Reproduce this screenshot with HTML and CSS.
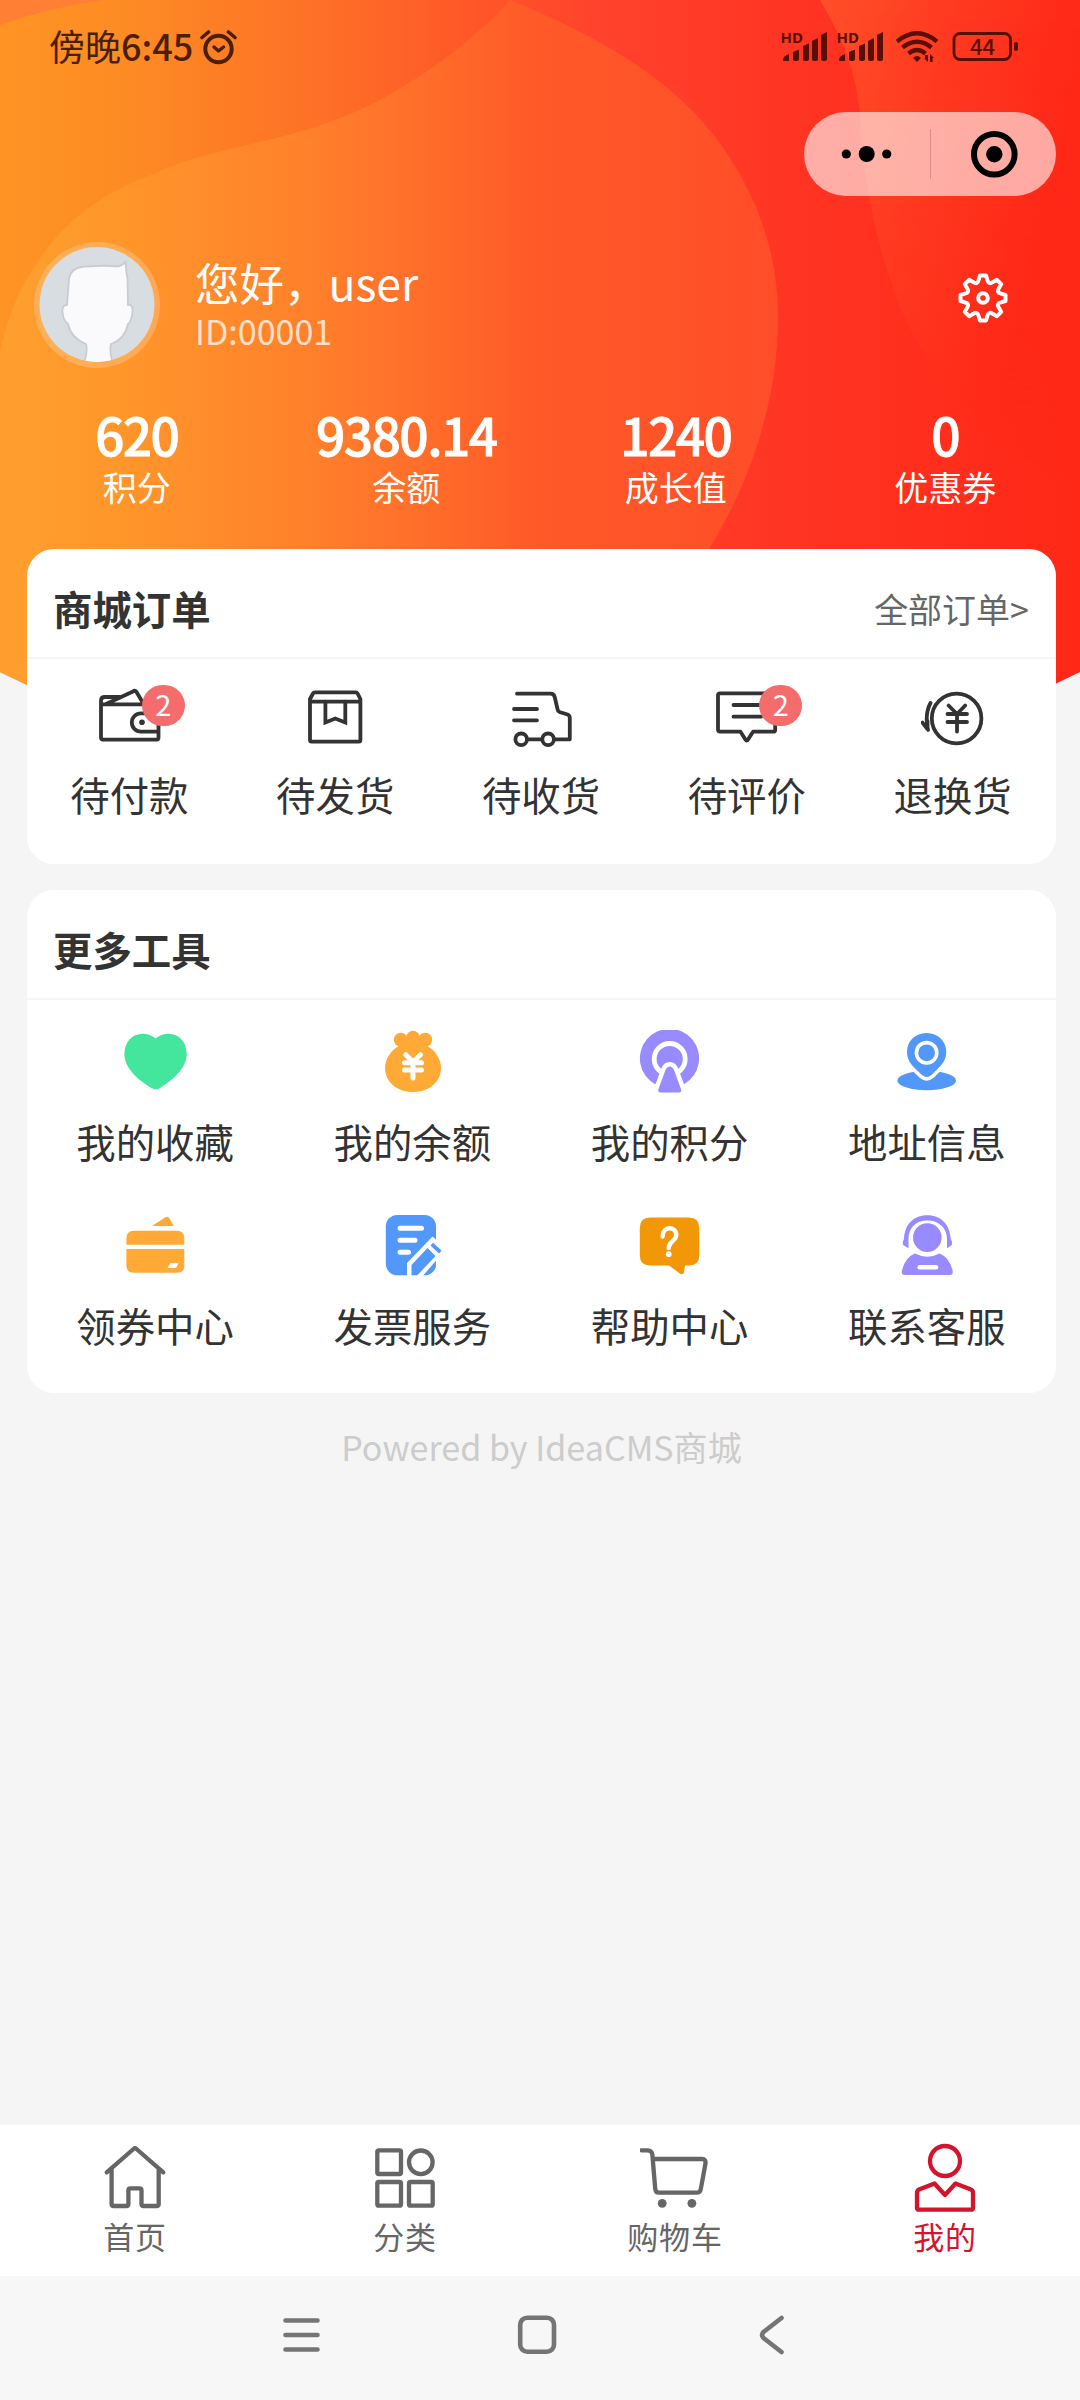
FILE: index.html
```html
<!DOCTYPE html>
<html lang="zh-CN">
<head>
<meta charset="utf-8">
<title>我的</title>
<link rel="stylesheet" href="styles.css">
</head>
<body>
<div class="phone">
  <header class="hero">
    <svg class="hero-bg" viewBox="0 0 1080 810" width="1080" height="810" aria-hidden="true">
      <defs>
        <linearGradient id="base" gradientUnits="userSpaceOnUse" x1="0" y1="0" x2="1080" y2="0">
          <stop offset="0" stop-color="#fe9423"/><stop offset=".12" stop-color="#fd8b24"/><stop offset=".3" stop-color="#fe6f27"/><stop offset=".46" stop-color="#ff5328"/><stop offset=".55" stop-color="#ff432c"/><stop offset=".75" stop-color="#ff3322"/><stop offset="1" stop-color="#ff2817"/>
        </linearGradient>
        <linearGradient id="blob" gradientUnits="userSpaceOnUse" x1="0" y1="0" x2="780" y2="0">
          <stop offset="0" stop-color="#ff9f30"/><stop offset=".16" stop-color="#ff962a"/><stop offset=".4" stop-color="#ff802b"/><stop offset=".54" stop-color="#ff6e2a"/><stop offset=".68" stop-color="#ff5a28"/><stop offset="1" stop-color="#ff4d29"/>
        </linearGradient>
        <linearGradient id="side" gradientUnits="userSpaceOnUse" x1="820" y1="0" x2="1080" y2="60">
          <stop offset="0" stop-color="#ff5029"/><stop offset=".5" stop-color="#ff3a20"/><stop offset="1" stop-color="#ff2817"/>
        </linearGradient>
        <linearGradient id="sideFade" gradientUnits="userSpaceOnUse" x1="0" y1="0" x2="0" y2="490">
          <stop offset="0" stop-color="#fff"/><stop offset=".6" stop-color="#ddd"/><stop offset="1" stop-color="#444"/>
        </linearGradient>
        <mask id="sideMask"><rect x="800" width="280" height="500" fill="url(#sideFade)"/></mask>
        <clipPath id="arc"><path d="M0 0H1080V672Q540 940 0 672Z"/></clipPath>
      </defs>
      <g clip-path="url(#arc)">
        <rect width="1080" height="810" fill="url(#base)"/>
        <path d="M0 25Q50 7 105 0H0Z" fill="#ff8034"/>
        <path d="M510 0C620 45 680 90 716 138C755 190 778 250 778 317C778 410 745 490 709 549L640 810H0V353C8 310 28 270 55 239C90 200 120 188 160 171C215 148 265 145 330 122C400 97 470 45 510 0Z" fill="url(#blob)"/>
        <path d="M820 0C842 38 856 69 860 115C864 190 878 245 895 294C915 350 965 430 1080 490V0Z" fill="url(#side)" mask="url(#sideMask)"/>
      </g>
    </svg>

    <div class="status">
      <div class="status-time">
        <span>傍晚<b>6:45</b></span>
        <svg class="alarm" viewBox="0 0 38 36" width="38" height="36" fill="none" stroke="#4b1f04" stroke-width="4" stroke-linecap="round" stroke-linejoin="round">
          <circle cx="18.500" cy="20" r="13.200"/><path d="M14 18l4.500 4 5-4" stroke-width="3.400"/><path d="M2 8.500L8.500 3M28.500 3L35 8.500" stroke-width="3.600"/>
        </svg>
      </div>
      <svg class="status-icons" viewBox="0 0 240 34" width="240" height="34" fill="#571003">
        <g id="signal">
          <text x=".5" y="12.800" class="hd">HD</text>
          <path d="M3 30q0-4 6-6v7h-5q-1 0-1-1M13 22l6-2.600V29q0 2-2 2h-2q-2 0-2-2zM23 16l6-2.600V29q0 2-2 2h-2q-2 0-2-2zM32 11l6-3V29q0 2-2 2h-2q-2 0-2-2zM41 5l6-3V29q0 2-2 2h-2q-2 0-2-2z"/>
        </g>
        <use href="#signal" x="56"/>
        <g fill="none" stroke="#571003" stroke-width="4.400">
          <path d="M117 11.500Q137 -5 157 11.500M122.500 17.500Q137 6 151.500 17.500M128.500 23.500Q137 16.500 145.500 23.500"/>
        </g>
        <path d="M133 28q4-4 8 0l-4 4zM145 25h3v7l-4-4h1zM150 32v-8l4 4h-1.500v4z"/>
        <rect x="174" y="3.500" width="56.500" height="26" rx="6" fill="none" stroke="#571003" stroke-width="2.800"/>
        <rect x="234" y="12" width="4" height="9" rx="2"/>
        <text x="202.500" y="25" text-anchor="middle" class="battery">44</text>
      </svg>
    </div>

    <div class="capsule">
      <svg viewBox="0 0 126 84" width="126" height="84"><circle cx="42.300" cy="42" r="4.600"/><circle cx="62.700" cy="42" r="8"/><circle cx="82.700" cy="42" r="4.600"/></svg>
      <svg viewBox="0 0 126 84" width="126" height="84"><path d="M.5 17v50" stroke="#e98a80"/><circle cx="64.300" cy="42.300" r="20.300" fill="none" stroke="#000" stroke-width="6"/><circle cx="64.300" cy="42.300" r="8.200"/></svg>
    </div>

    <div class="profile">
      <svg class="avatar" viewBox="0 0 126 126" width="126" height="126">
        <defs><clipPath id="face"><circle cx="63" cy="62.500" r="57.500"/></clipPath></defs>
        <circle cx="63" cy="63" r="63" fill="#fff" opacity=".2"/>
        <circle cx="63" cy="62.500" r="57.500" fill="#d8dde1"/>
        <path clip-path="url(#face)" d="M35 37Q37 25 52 24.500Q72 23 84 24.500Q88 24 91.500 20Q92 30 93.500 37L94 63Q99 62 98.500 69Q98 79 94 82Q91 97 77 102Q75 108 79 122H50Q54 108 52 102Q37 96 34 82Q29 78 28.500 70Q28 63 33 63Z" fill="#fafafd" stroke="#c9ccd2" stroke-width="1.800"/>
      </svg>
      <div class="who">
        <div class="name">您好，user</div>
        <div class="uid">ID:00001</div>
      </div>
      <svg class="gear" viewBox="-25 -25 50 50" width="50" height="50" fill="none" stroke="#fff" stroke-width="4" stroke-linejoin="round">
        <path d="M-3 -22.500H3L4.400 -18C5 -14.800 7 -13.900 9.600 -15.800L13.900 -18.200L18.200 -13.900L15.800 -9.600C14 -6.900 14.800 -4.900 18 -4.400L22.500 -3V3L18 4.400C14.800 5 13.900 7 15.800 9.600L18.200 13.900L13.900 18.200L9.600 15.800C6.900 14 4.900 14.800 4.400 18L3 22.500H-3L-4.400 18C-5 14.800 -7 13.900 -9.600 15.800L-13.900 18.200L-18.200 13.900L-15.800 9.600C-14 6.900 -14.800 4.900 -18 4.400L-22.500 3V-3L-18 -4.400C-14.800 -5 -13.900 -7 -15.800 -9.600L-18.200 -13.900L-13.900 -18.200L-9.600 -15.800C-6.900 -14 -4.900 -14.800 -4.400 -18Z"/>
        <circle r="4.800"/>
      </svg>
    </div>

    <div class="stats">
      <div class="stat"><b>620</b><span>积分</span></div>
      <div class="stat"><b>9380.14</b><span>余额</span></div>
      <div class="stat"><b>1240</b><span>成长值</span></div>
      <div class="stat"><b>0</b><span>优惠券</span></div>
    </div>
  </header>

  <main class="content">
    <section class="card orders">
      <div class="card-head"><h2>商城订单</h2><a class="more">全部订单&gt;</a></div>
      <div class="order-list">
        <div class="order">
          <div class="icon-wrap">
            <svg class="line" viewBox="0 0 64 64"><path d="M3 19.300H60.500V52.500Q60.500 54.700 58.500 54.700H5Q3 54.700 3 52.700V15.500Q3 12 7 12H22M8 19L35 6.500Q37 5 38.500 7L45 18M60 28.300H43A9.200 9.200 0 0 0 43 46.700H60"/><circle cx="44" cy="37.300" r="2.800" class="dot"/></svg>
            <span class="badge">2</span>
          </div>
          <span class="label">待付款</span>
        </div>
        <div class="order">
          <div class="icon-wrap">
            <svg class="line" viewBox="0 0 64 64"><path d="M6 16.700H56.400V55Q56.400 56.700 54.700 56.700H7.700Q6 56.700 6 55V14L9 8.500Q9.700 7.300 11 7.300H51.500Q53 7.300 53.600 8.500L56.400 14V17"/><path d="M21.400 16.700V37.500L31.300 33.500L41.300 37.500V16.700" stroke-linejoin="miter"/></svg>
          </div>
          <span class="label">待发货</span>
        </div>
        <div class="order">
          <div class="icon-wrap">
            <svg class="line" viewBox="0 0 64 64"><path d="M8 8.700H41.500Q45 8.700 45.700 12L48.500 24Q48.800 26.300 50.500 27L58.500 29.500Q60.800 30.300 60.800 33V54.300H45.300M33 54.300H18.300M5 24H28M5 35.300H28"/><circle cx="12.200" cy="54.300" r="5.800"/><circle cx="39.100" cy="54.300" r="5.800"/></svg>
          </div>
          <span class="label">待收货</span>
        </div>
        <div class="order">
          <div class="icon-wrap">
            <svg class="line" viewBox="0 0 64 64"><path d="M5 8.300H58.200Q60.200 8.300 60.200 10.300V44.700Q60.200 46.700 58.200 46.700H38L33 54.500Q31.700 56.500 30.400 54.500L25.500 46.700H5Q3 46.700 3 44.700V10.300Q3 8.300 5 8.300ZM18.500 20H46M18.500 31.700H46"/></svg>
            <span class="badge">2</span>
          </div>
          <span class="label">待评价</span>
        </div>
        <div class="order">
          <div class="icon-wrap">
            <svg class="line" viewBox="0 0 64 64"><circle cx="35.600" cy="33.500" r="24.800"/><path d="M27.600 20.500L36 29L44.200 20.500M26.500 29H46M26.500 37H46M36 29V46.500M9.500 18Q3.500 29 7 45L1.500 37.500M6.500 36V44"/></svg>
          </div>
          <span class="label">退换货</span>
        </div>
      </div>
    </section>

    <section class="card tools">
      <div class="card-head"><h2>更多工具</h2></div>
      <div class="tool-grid">
        <div class="tool">
          <svg viewBox="0 0 64 64"><path fill="#43e69c" d="M31.700 8.500C27 4.700 22 3.700 18.500 3.700C8 3.700 .4 12 .4 24C.4 38 14 50 27.500 58Q31.700 60.400 36 58C49 50 62.700 38 62.700 24C62.700 12 55 3.700 44.800 3.700C41 3.700 36 4.700 31.700 8.500Z"/></svg>
          <span class="label">我的收藏</span>
        </div>
        <div class="tool">
          <svg viewBox="0 0 64 64"><g fill="#ffa936"><path d="M18 16Q32 10 46 16C54 20 60 29 60 38C60 52 48 62 32 62S4 52 4 38C4 29 10 20 18 16Z"/><circle cx="19.800" cy="9.800" r="7"/><circle cx="32" cy="7.500" r="6.800"/><circle cx="44.200" cy="9.800" r="7"/><path d="M19 9H45L47 18H17Z"/></g><path d="M24.800 24.700L32 32L39.500 24.700M23.500 32.700H40.500M23.500 40H40.500M32 32V48" fill="none" stroke="#fff" stroke-width="5" stroke-linecap="round" stroke-linejoin="round"/></svg>
          <span class="label">我的余额</span>
        </div>
        <div class="tool">
          <svg viewBox="0 0 64 64"><path fill="#978bff" d="M16.600 54A29.600 29.600 0 1 1 46.400 54Z"/><circle cx="31.700" cy="29" r="15.500" fill="none" stroke="#fff" stroke-width="4.800"/><path d="M31.700 36.500Q34.500 36.500 36 40L43 59Q44 62.500 41 62.500H22.500Q19.500 62.500 20.500 59L27.500 40Q29 36.500 31.700 36.500Z" fill="#978bff" stroke="#fff" stroke-width="9" paint-order="stroke" stroke-linejoin="round"/></svg>
          <span class="label">我的积分</span>
        </div>
        <div class="tool">
          <svg viewBox="0 0 64 64"><ellipse cx="31.700" cy="50.500" rx="29.300" ry="9.700" fill="#5198fa"/><path d="M31.600 3C20 3 12 11.500 12 22C12 33 20 38 27 45Q31.600 49 36.500 45C43 38 51.300 33 51.300 22C51.300 11.500 43 3 31.600 3Z" fill="#5198fa" stroke="#fff" stroke-width="7" paint-order="stroke"/><circle cx="31.600" cy="22.800" r="10.200" fill="none" stroke="#fff" stroke-width="3.600"/></svg>
          <span class="label">地址信息</span>
        </div>
        <div class="tool">
          <svg viewBox="0 0 64 64"><g fill="#ffa936"><path d="M28 12L41 3.500Q44 1.800 45.500 4.500L49.800 12ZM2.400 30.700V24.500Q2.400 16.700 10 16.700H53Q60.300 16.700 60.300 24.500V30.700ZM2.400 35H60.300V51.500Q60.300 58.800 53 58.800H10Q2.400 58.800 2.400 51.500Z"/></g><path d="M46.500 49H54.500L52 54H43.500Z" fill="#fff"/></svg>
          <span class="label">领券中心</span>
        </div>
        <div class="tool">
          <svg viewBox="0 0 64 64"><rect x="4.800" y="1" width="50.200" height="60.300" rx="11.500" fill="#5198fa"/><path d="M19 14.300H40.500M19 26.300H34M19 38.300H27.500" fill="none" stroke="#fff" stroke-width="5" stroke-linecap="round"/><path d="M26 64V49L51.500 22.500L65 34L59 42L40 64Z" fill="#fff"/><path d="M30.500 61.300V51L46.500 34L54.500 42L38 59.500L36 61.300ZM49.500 31.500L52 28.800L60.500 36.500L58 39.500Z" fill="#5198fa"/><path d="M55 47.500V52Q54 59 44 61.300Z" fill="#5198fa"/></svg>
          <span class="label">发票服务</span>
        </div>
        <div class="tool">
          <svg viewBox="0 0 64 64"><path fill="#f29706" d="M12 3.500H51Q61.300 3.500 61.300 14V41Q61.300 51.400 51 51.400H47L46 58.500Q45.300 61 42.500 60L31 51.400H12Q1.800 51.400 1.800 41V14Q1.800 3.500 12 3.500Z"/><path d="M24.600 22.500C24.600 11.500 38.500 12 38.300 21C38.200 27 30.700 27.500 30.700 34" fill="none" stroke="#fff" stroke-width="4.400" stroke-linecap="round"/><circle cx="30.700" cy="40.200" r="2.900" fill="#fff"/></svg>
          <span class="label">帮助中心</span>
        </div>
        <div class="tool">
          <svg viewBox="0 0 64 64"><g fill="#978bff"><path d="M8 31Q7.500 27 9 25C9.500 11 18 1.200 32.300 1.200S55 11 55.700 25Q57.500 27 56.800 31L52 34.200V25C52 14 44 6.500 32.300 6.500S13.500 14 13.500 25V34.200Z"/><circle cx="32.300" cy="23.600" r="14.300"/><path d="M20 39.500Q32.300 46 44.500 39.500Q54 43 57.500 56Q58.500 61 55 61H9.500Q6 61 7 56Q10.500 43 20 39.500Z"/></g><path d="M24.700 53.300H41" stroke="#fff" stroke-width="4.600" stroke-linecap="round"/></svg>
          <span class="label">联系客服</span>
        </div>
      </div>
    </section>

    <p class="powered">Powered by IdeaCMS商城</p>
  </main>

  <nav class="tabbar">
    <div class="tab">
      <svg viewBox="0 0 70 70"><path d="M6.700 30.300L33.500 7Q35 5.700 36.500 7L63.300 30.300M11.600 27V62Q11.600 64 13.600 64H26.400Q28.400 64 28.400 62V48.300Q28.400 46.300 30.400 46.300H39.500Q41.500 46.300 41.500 48.300V62Q41.500 64 43.500 64H56.700Q58.700 64 58.700 62V27"/></svg>
      <span>首页</span>
    </div>
    <div class="tab">
      <svg viewBox="0 0 70 70"><rect x="7.300" y="8.300" width="23.700" height="23.700" rx="1.500"/><circle cx="50.800" cy="20.300" r="11.800"/><rect x="7.300" y="40" width="23.700" height="23.700" rx="1.500"/><rect x="39" y="40" width="23.700" height="23.700" rx="1.500"/></svg>
      <span>分类</span>
    </div>
    <div class="tab">
      <svg viewBox="0 0 70 70"><path d="M1.500 8.300H7.500Q12 8.300 12.400 13L15.200 46.500Q15.500 50.700 19 50.700H56.500Q60.200 50.700 60.800 47L65.500 21.500Q66 17 62 17H13"/><g class="wheel"><circle cx="22.200" cy="61.300" r="4.400"/><circle cx="51.900" cy="61.300" r="4.400"/></g></svg>
      <span>购物车</span>
    </div>
    <div class="tab active">
      <svg viewBox="0 0 70 70"><circle cx="35" cy="19" r="15"/><path d="M24.500 41.500L9 47.500Q7 48.500 7 51V65.700Q7 67.700 9 67.700H61Q63 67.700 63 65.700V51Q63 48.500 61 47.500L45.500 41.500L35 53Z"/></svg>
      <span>我的</span>
    </div>
  </nav>

  <div class="sysbar">
    <svg viewBox="0 0 40 40"><path d="M4.500 5.500H36.500M4.500 20H36.500M4.500 34.500H36.500"/></svg>
    <svg viewBox="0 0 40 40"><rect x="3.200" y="2.700" width="33.800" height="34" rx="7"/></svg>
    <svg viewBox="0 0 40 40"><path d="M28.500 3L10.500 17Q7.500 20 10.500 23L28.500 37"/></svg>
  </div>
</div>
</body>
</html>
```
FILE: styles.css
```css
* { box-sizing: border-box; }

body {
  margin: 0;
  background: #f5f5f5;
  color: #333;
  font-family: "Noto Sans CJK SC", "Noto Sans", sans-serif;
}

svg { display: block; flex: none; }
h2, p { margin: 0; }

.phone {
  display: flex;
  flex-direction: column;
  width: 1080px;
  height: 2400px;
  overflow: hidden;
}

/* hero */
.hero {
  position: relative;
  z-index: 0;
  display: flex;
  flex-direction: column;
  color: #fff;
}
.hero-bg {
  position: absolute;
  top: 0;
  left: 0;
  z-index: -1;
}

.status {
  display: flex;
  justify-content: space-between;
  align-items: center;
  height: 94px;
  padding: 0 60px 0 49px;
}
.status-time {
  display: flex;
  align-items: center;
  gap: 7px;
  color: #4b1f04;
  font-size: 36px;
  line-height: 40px;
}
.status-time span { padding-bottom: 5px; }
.status-time b { font-weight: 500; }
.status-icons { overflow: visible; }
.hd { font: 700 15px "Noto Sans", sans-serif; }
.battery { font: 500 22px "Noto Sans CJK SC", sans-serif; }

.capsule {
  display: flex;
  align-self: flex-end;
  width: 252px;
  height: 84px;
  margin: 18px 24px 0 0;
  border-radius: 42px;
  background: rgba(255, 255, 255, .6);
}

.profile {
  display: flex;
  align-items: center;
  margin-top: 46px;
  padding: 0 72px 0 34px;
}
.who { flex: 1; margin-left: 35px; }
.name { padding-bottom: 2px; font-size: 44.5px; line-height: 50px; }
.uid { font-size: 34px; line-height: 44px; color: rgba(255, 255, 255, .76); }
.gear { align-self: flex-start; margin-top: 31px; }

.stats {
  display: grid;
  grid-template-columns: repeat(4, 1fr);
  margin-top: 36px;
  padding-left: 2px;
}
.stat {
  display: flex;
  flex-direction: column;
  align-items: center;
}
.stat b {
  font-size: 51.5px;
  font-weight: 500;
  letter-spacing: -1.6px;
  line-height: 60px;
  -webkit-text-stroke: .8px #fff;
}
.stat span { font-size: 34px; line-height: 46px; }

/* cards */
.content {
  position: relative;
  z-index: 1;
  display: flex;
  flex-direction: column;
  gap: 26px;
  margin-top: 39px;
  padding: 0 24px 0 27px;
}
.card {
  border-radius: 27px;
  background: #fff;
}
.card-head {
  display: flex;
  justify-content: space-between;
  align-items: center;
  height: 110px;
  padding: 9px 27px 0;
  border-bottom: 2px solid #f6f6f6;
}
.card-head h2 { font-size: 39.4px; font-weight: 700; line-height: 56px; margin-left: -1px; }
.more { padding-top: 3px; font-size: 34px; line-height: 48px; color: #666; }
.label { margin-right: 1px; font-size: 39.4px; line-height: 56px; }

.orders { padding-bottom: 42px; }
.order-list {
  display: grid;
  grid-template-columns: repeat(5, 1fr);
  padding-top: 26px;
}
.order {
  display: flex;
  flex-direction: column;
  align-items: center;
  gap: 17px;
}
.icon-wrap { position: relative; width: 64px; height: 64px; }
.line {
  width: 64px;
  height: 64px;
  fill: none;
  stroke: #333;
  stroke-width: 3.8;
  stroke-linecap: round;
  stroke-linejoin: round;
}
.line .dot { fill: #333; stroke: none; }
.badge {
  position: absolute;
  top: 0;
  left: 44px;
  width: 43px;
  height: 41px;
  border-radius: 21px;
  background: #f56c6c;
  color: #fff;
  font-size: 29px;
  line-height: 36px;
  text-align: center;
}

.tools { padding-bottom: 40px; }
.tool-grid {
  display: grid;
  grid-template-columns: repeat(4, 1fr);
  row-gap: 45px;
  padding-top: 30px;
}
.tool {
  display: flex;
  flex-direction: column;
  align-items: center;
  gap: 19px;
}
.tool svg { width: 64px; height: 64px; }

.powered {
  margin-top: 3px;
  color: #ccc;
  font-size: 34.1px;
  line-height: 48px;
  text-align: center;
}

/* bottom tabs */
.tabbar {
  display: grid;
  grid-template-columns: repeat(4, 1fr);
  height: 151px;
  margin-top: auto;
  padding-top: 17px;
  background: #fff;
}
.tab {
  display: flex;
  flex-direction: column;
  align-items: center;
  gap: 4px;
  color: #666;
  font-size: 31px;
  letter-spacing: .8px;
  line-height: 40px;
}
.tab svg {
  width: 70px;
  height: 70px;
  fill: none;
  stroke: currentColor;
  stroke-width: 4.3;
  stroke-linecap: round;
  stroke-linejoin: round;
}
.tab .wheel { fill: currentColor; stroke: none; }
.tab.active { color: #d4142d; }

.sysbar {
  display: flex;
  align-items: center;
  gap: 196px;
  height: 124px;
  padding: 0 0 6px 281px;
  background: #f7f7f7;
}
.sysbar svg {
  width: 40px;
  height: 40px;
  fill: none;
  stroke: #757575;
  stroke-width: 4.6;
  stroke-linecap: round;
  stroke-linejoin: round;
}
```
